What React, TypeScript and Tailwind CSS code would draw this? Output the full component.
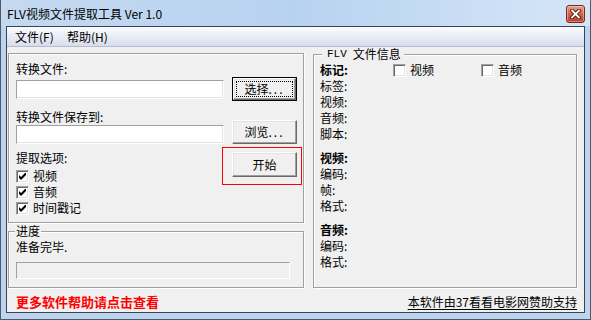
import type { ReactNode } from 'react';

const font = "font-['Noto_Sans_CJK_SC',sans-serif]";

function CheckBox({ checked }: { checked?: boolean }) {
  return (
    <span className="flex h-[13px] w-[13px] shrink-0 items-center justify-center border border-t-[#a0a0a0] border-l-[#a0a0a0] border-r-white border-b-white bg-white shadow-[inset_1px_1px_0_#696969,inset_-1px_-1px_0_#e3e3e3]">
      {checked && (
        <svg width="7" height="7" viewBox="0 0 7 7">
          <polygon points="0,2 2,4 7,-1 7,2 2,7 0,5" fill="#000" />
        </svg>
      )}
    </span>
  );
}

function Button({ children, className }: { children: ReactNode; className: string }) {
  return (
    <div
      className={`flex items-center justify-center border border-t-white border-l-white border-r-[#696969] border-b-[#696969] bg-[#f0f0f0] text-[12px] leading-[14px] shadow-[inset_-1px_-1px_0_#a0a0a0,inset_1px_1px_0_#e3e3e3] ${className}`}
    >
      {children}
    </div>
  );
}

function Field({ className }: { className: string }) {
  return (
    <div
      className={`border border-t-[#a0a0a0] border-l-[#a0a0a0] border-r-white border-b-white bg-white shadow-[inset_-1px_-1px_0_#e3e3e3] ${className}`}
    />
  );
}

function Row({ children, bold }: { children: ReactNode; bold?: boolean }) {
  return (
    <div className={`flex h-[16px] items-center text-[12px] leading-[16px] ${bold ? 'font-bold' : ''}`}>
      {children}
    </div>
  );
}

function Option({ label }: { label: string }) {
  return (
    <div className="flex h-[16px] items-center gap-[4px] leading-[16px]">
      <CheckBox checked />
      <span>{label}</span>
    </div>
  );
}

export default function App() {
  return (
    <div
      className={`flex h-[320px] w-[591px] flex-col overflow-hidden border-x border-b border-[#4d5a69] bg-[#bcd4ee] text-black ${font}`}
    >
      {/* title bar */}
      <div className="flex h-[26px] shrink-0 items-center justify-between bg-linear-to-r from-[#c5d9f0] via-[#b7d2f0] to-[#d6e6f7] pl-[6px] pr-[5px]">
        <span className="pt-[2px] text-[12px] leading-[14px]">FLV视频文件提取工具 Ver 1.0</span>
        <div className="mt-[2px] flex h-[18px] w-[19px] items-center justify-center rounded-[3px] border border-[#7a2a1c] bg-linear-to-b from-[#e8a08a] via-[#d5604a] to-[#c2402a] shadow-[inset_0_0_0_1px_rgba(255,255,255,0.35)]">
          <svg width="11" height="10" viewBox="0 0 11 10">
            <path d="M2 1.5 L9 8.5 M9 1.5 L2 8.5" stroke="#3a1a14" strokeWidth="3.6" strokeLinecap="square" />
            <path d="M2 1.5 L9 8.5 M9 1.5 L2 8.5" stroke="#fff" strokeWidth="1.8" strokeLinecap="square" />
          </svg>
        </div>
      </div>

      {/* client */}
      <div className="mx-[5px] flex h-[287px] shrink-0 flex-col border border-[#3a4450] bg-[#f0f0f0]">
        {/* menu */}
        <div className="flex h-[20px] shrink-0 items-center border-b border-[#b4bbcf] bg-linear-to-b from-[#fbfcfe] to-[#d8ddec] pl-[8px] pt-[1px] text-[12px] leading-[14px]">
          <span className="w-[52px]">文件(F)</span>
          <span>帮助(H)</span>
        </div>

        {/* content */}
        <div className="flex flex-1 flex-col pl-[1px]">
          <div className="flex items-start">
            {/* left column */}
            <div className="mt-[6px] flex w-[296px] flex-col">
              <div className="flex h-[170px] flex-col border border-[#a0a0a0] pl-[7px] pt-[8px] text-[12px] shadow-[inset_1px_1px_0_#fff,1px_1px_0_#fff]">
                <div className="h-[14px] leading-[14px]">转换文件:</div>
                <div className="mt-[1px] flex h-[24px] items-center">
                  <Field className="h-[19px] w-[208px]" />
                  <div className="ml-[8px] flex h-[24px] w-[65px] border border-black">
                    <Button className="flex-1 p-[2px]">
                      <div className="flex h-full w-full items-center justify-center border border-dotted border-black">
                        选择<span className="tracking-[2px]">...</span>
                      </div>
                    </Button>
                  </div>
                </div>
                <div className="mt-[9px] h-[14px] leading-[14px]">转换文件保存到:</div>
                <div className="mt-[-4px] flex h-[24px] items-end">
                  <Field className="h-[19px] w-[208px]" />
                  <Button className="ml-[8px] h-[24px] w-[65px]">
                    浏览<span className="tracking-[2px]">...</span>
                  </Button>
                </div>
                <div className="mt-[3px] flex">
                  <div className="flex w-[206px] flex-col">
                    <div className="mt-[4px] h-[14px] leading-[14px]">提取选项:</div>
                    <div className="mt-[3px]">
                      <Option label="视频" />
                    </div>
                    <Option label="音频" />
                    <Option label="时间戳记" />
                  </div>
                  <div className="h-[38px] w-[80px] border border-[#ff0000] pl-[9px] pt-[4px]">
                    <Button className="h-[25px] w-[65px]">开始</Button>
                  </div>
                </div>
              </div>

              <div className="mt-[8px] flex h-[57px] flex-col border border-[#a0a0a0] pl-[7px] text-[12px] shadow-[inset_1px_1px_0_#fff,1px_1px_0_#fff]">
                <div className="ml-[-1px] mt-[-8px] w-fit bg-[#f0f0f0] px-[1px] leading-[14px]">进度</div>
                <div className="mt-[2px] h-[14px] leading-[14px]">准备完毕.</div>
                <div className="mt-[8px] h-[17px] w-[274px] border border-t-[#a0a0a0] border-l-[#a0a0a0] border-r-white border-b-white bg-[#f0f0f0]" />
              </div>
            </div>

            {/* right column */}
            <div className="ml-[9px] mt-[7px] flex h-[234px] w-[264px] flex-col border border-[#a0a0a0] pl-[6px] text-[12px] shadow-[inset_1px_1px_0_#fff,1px_1px_0_#fff]">
              <div className="ml-[2px] mt-[-8px] flex w-fit items-center bg-[#f0f0f0] pl-[5px] pr-[3px] leading-[14px]">
                <span className="font-['Liberation_Mono',monospace] text-[11px]">FLV</span>
                <span className="ml-[6px]">文件信息</span>
              </div>
              <div className="mt-[1px] flex h-[16px] items-center text-[12px] leading-[16px]">
                <span className="w-[73px] font-bold">标记:</span>
                <div className="flex w-[88px] items-center gap-[4px]">
                  <CheckBox />
                  <span>视频</span>
                </div>
                <div className="flex items-center gap-[4px]">
                  <CheckBox />
                  <span>音频</span>
                </div>
              </div>
              <Row>标签:</Row>
              <Row>视频:</Row>
              <Row>音频:</Row>
              <Row>脚本:</Row>
              <div className="mt-[8px]">
                <Row bold>视频:</Row>
              </div>
              <Row>编码:</Row>
              <Row>帧:</Row>
              <Row>格式:</Row>
              <div className="mt-[8px]">
                <Row bold>音频:</Row>
              </div>
              <Row>编码:</Row>
              <Row>格式:</Row>
            </div>
          </div>

          {/* footer */}
          <div className="mt-[6px] flex h-[16px] items-center justify-between pl-[8px] pr-[7px]">
            <span className="text-[13px] font-bold leading-[16px] text-[#ff0000]">更多软件帮助请点击查看</span>
            <span className="text-[12px] leading-[16px] underline underline-offset-[2px]">本软件由37看看电影网赞助支持</span>
          </div>
        </div>
      </div>
    </div>
  );
}
